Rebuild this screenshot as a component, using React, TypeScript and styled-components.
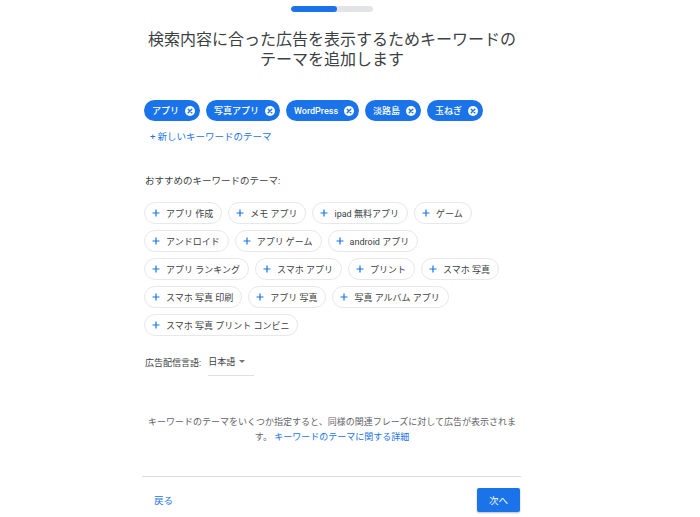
import React from "react";
import styled, { createGlobalStyle } from "styled-components";

const Global = createGlobalStyle`
  html, body { margin: 0; padding: 0; background: #fff; }
  body {
    font-family: Roboto, "Noto Sans CJK JP", sans-serif;
    color: #3c4043;
    -webkit-font-smoothing: antialiased;
  }
`;

const Page = styled.div`
  width: 700px;
  height: 517px;
  overflow: hidden;
  box-sizing: border-box;
  padding-left: 142px;
  display: flex;
`;

const Column = styled.div`
  width: 380px;
  display: flex;
  flex-direction: column;
`;

const Progress = styled.div`
  align-self: center;
  margin-top: 6px;
  width: 82px;
  height: 6px;
  border-radius: 3px;
  background: #e3e4e6;
  overflow: hidden;
`;

const ProgressFill = styled.div<{ $pct: number }>`
  width: ${(p) => p.$pct}%;
  height: 100%;
  border-radius: 3px;
  background: #1a73e8;
`;

const Title = styled.h1`
  margin: 18px 0 0;
  font-size: 16px;
  line-height: 20px;
  font-weight: 400;
  text-align: center;
  color: #3c4043;
`;

const SelectedList = styled.div`
  margin-top: 30px;
  padding-left: 2px;
  display: flex;
  flex-wrap: wrap;
  gap: 6px;
`;

const SelectedChip = styled.div`
  height: 21px;
  box-sizing: border-box;
  border-radius: 11px;
  background: #1a73e8;
  color: #fff;
  display: inline-flex;
  align-items: center;
  gap: 6px;
  padding: 0 5px 0 8px;
  font-size: 9px;
  font-weight: 500;
  white-space: nowrap;
`;

const NewLink = styled.div`
  margin-top: 9px;
  padding-left: 8px;
  font-size: 9.5px;
  line-height: 14px;
  color: #1a73e8;
  display: flex;
  align-items: center;
  gap: 2px;
`;

const SectionLabel = styled.div`
  margin-top: 30px;
  padding-left: 3px;
  font-size: 9.5px;
  line-height: 14px;
  color: #3c4043;
`;

const SuggestList = styled.div`
  margin-top: 14px;
  padding-left: 2px;
  max-width: 374px;
  display: flex;
  flex-wrap: wrap;
  gap: 6px 6px;
`;

const SuggestChip = styled.div`
  height: 22px;
  box-sizing: border-box;
  border: 1px solid #e6e8eb;
  border-radius: 11px;
  background: #fff;
  display: inline-flex;
  align-items: center;
  gap: 6px;
  padding: 0 8px 0 7px;
  font-size: 9px;
  color: #3c4043;
  white-space: nowrap;
`;

const LangRow = styled.div`
  margin-top: 12px;
  padding-left: 3px;
  display: flex;
  align-items: center;
  gap: 7px;
  font-size: 9px;
  color: #3c4043;
`;

const Dropdown = styled.div`
  height: 28px;
  box-sizing: border-box;
  border-bottom: 1px solid #e0e0e0;
  display: inline-flex;
  align-items: center;
  gap: 4px;
  padding-right: 9px;
  font-size: 9px;
  color: #3c4043;
`;

const Caret = styled.span`
  width: 0;
  height: 0;
  border-left: 3px solid transparent;
  border-right: 3px solid transparent;
  border-top: 3px solid #757575;
`;

const Info = styled.p`
  align-self: center;
  width: 372px;
  margin: 39px 0 0;
  font-size: 9px;
  line-height: 15px;
  text-align: center;
  color: #5f6368;
`;

const InfoLink = styled.span`
  color: #1a73e8;
`;

const Divider = styled.hr`
  margin: 31px 0 0;
  width: 379px;
  border: none;
  border-top: 1px solid #dadce0;
`;

const Footer = styled.div`
  margin-top: 11px;
  width: 378px;
  display: flex;
  justify-content: space-between;
  align-items: center;
`;

const BackButton = styled.div`
  padding-left: 12px;
  font-size: 9.5px;
  color: #1a73e8;
`;

const NextButton = styled.div`
  width: 43px;
  height: 24px;
  border-radius: 2px;
  background: #1a73e8;
  color: #fff;
  font-size: 9.5px;
  display: flex;
  align-items: center;
  justify-content: center;
  box-shadow: 0 1px 2px rgba(60, 64, 67, 0.35);
`;

const RemoveIcon = () => (
  <svg width="10" height="10" viewBox="0 0 10 10">
    <circle cx="5" cy="5" r="5" fill="#fff" />
    <path d="M3.2 3.2 L6.8 6.8 M6.8 3.2 L3.2 6.8" stroke="#1a73e8" strokeWidth="1.4" strokeLinecap="round" />
  </svg>
);

const PlusIcon = () => (
  <svg width="8" height="8" viewBox="0 0 8 8">
    <path d="M4 0.5 V7.5 M0.5 4 H7.5" stroke="#1a73e8" strokeWidth="1.2" />
  </svg>
);

const selected = ["アプリ", "写真アプリ", "WordPress", "淡路島", "玉ねぎ"];
const suggestions = [
  "アプリ 作成",
  "メモ アプリ",
  "ipad 無料アプリ",
  "ゲーム",
  "アンドロイド",
  "アプリ ゲーム",
  "android アプリ",
  "アプリ ランキング",
  "スマホ アプリ",
  "プリント",
  "スマホ 写真",
  "スマホ 写真 印刷",
  "アプリ 写真",
  "写真 アルバム アプリ",
  "スマホ 写真 プリント コンビニ",
];

export default function App() {
  return (
    <>
      <Global />
      <Page>
        <Column>
          <Progress>
            <ProgressFill $pct={56} />
          </Progress>
          <Title>検索内容に合った広告を表示するためキーワードのテーマを追加します</Title>
          <SelectedList>
            {selected.map((s) => (
              <SelectedChip key={s}>
                {s}
                <RemoveIcon />
              </SelectedChip>
            ))}
          </SelectedList>
          <NewLink>
            <span>+</span>
            <span>新しいキーワードのテーマ</span>
          </NewLink>
          <SectionLabel>おすすめのキーワードのテーマ:</SectionLabel>
          <SuggestList>
            {suggestions.map((s) => (
              <SuggestChip key={s}>
                <PlusIcon />
                {s}
              </SuggestChip>
            ))}
          </SuggestList>
          <LangRow>
            <span>広告配信言語:</span>
            <Dropdown>
              日本語
              <Caret />
            </Dropdown>
          </LangRow>
          <Info>
            キーワードのテーマをいくつか指定すると、同様の関連フレーズに対して広告が表示されます。 <InfoLink>キーワードのテーマに関する詳細</InfoLink>
          </Info>
          <Divider />
          <Footer>
            <BackButton>戻る</BackButton>
            <NextButton>次へ</NextButton>
          </Footer>
        </Column>
      </Page>
    </>
  );
}
